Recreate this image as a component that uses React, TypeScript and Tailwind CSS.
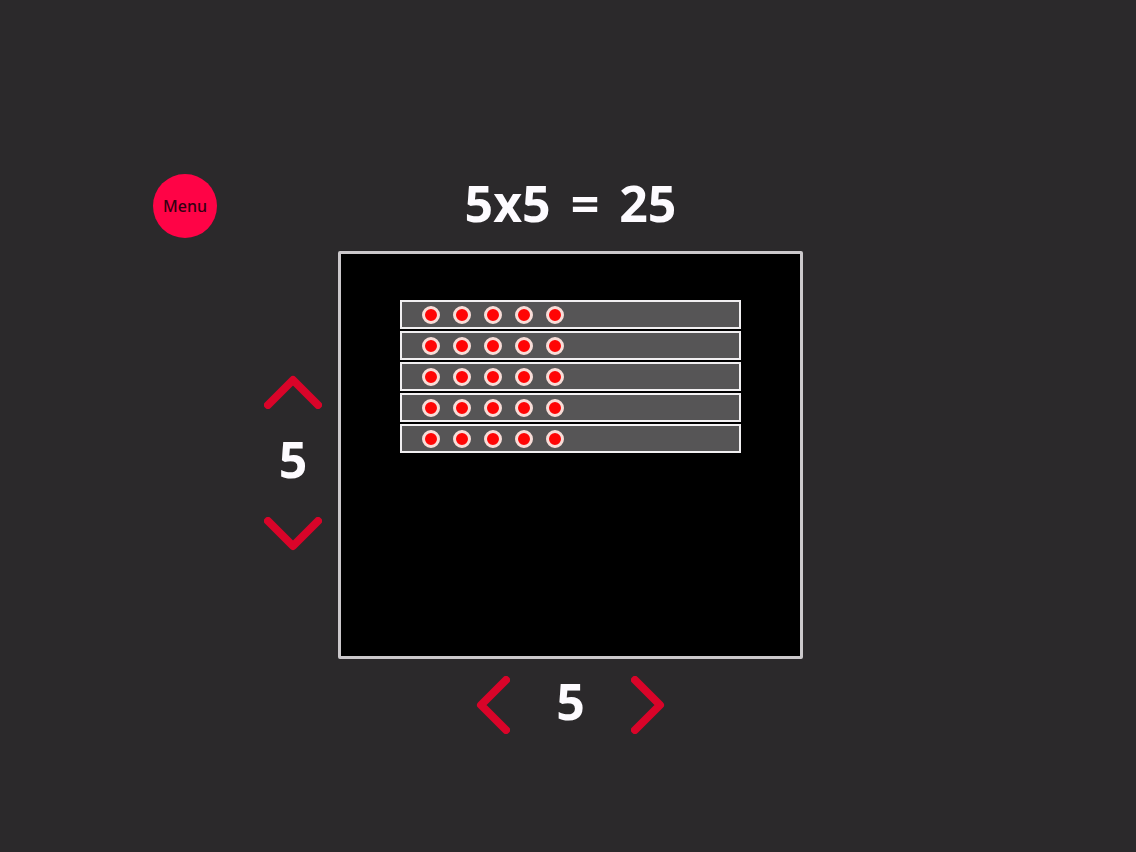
import { useState } from "react";

type Direction = "up" | "down" | "left" | "right";

const arrowPoints: Record<Direction, string> = {
  up: "4,30 29,5 54,30",
  down: "4,4 29,29 54,4",
  left: "30,4 5,29 30,54",
  right: "4,4 29,29 4,54",
};

function ArrowButton({
  direction,
  label,
  onClick,
}: {
  direction: Direction;
  label: string;
  onClick: () => void;
}) {
  const vertical = direction === "up" || direction === "down";
  return (
    <button type="button" aria-label={label} onClick={onClick} className="block shrink-0 cursor-pointer">
      <svg
        width={vertical ? 58 : 34}
        height={vertical ? 34 : 58}
        viewBox={vertical ? "0 0 58 34" : "0 0 34 58"}
        fill="none"
        stroke="#d90429"
        strokeWidth={8}
        strokeLinecap="round"
        strokeLinejoin="round"
        className="block"
      >
        <polyline points={arrowPoints[direction]} />
      </svg>
    </button>
  );
}

function CounterRow({ count }: { count: number }) {
  return (
    <div className="flex h-[29px] items-center gap-[13px] border-2 border-[#f1eff1] bg-[#565556] pl-5">
      {Array.from({ length: count }, (_, i) => (
        <span key={i} className="size-[18px] rounded-full border-3 border-[#f8ddd8] bg-[#ff0505]" />
      ))}
    </div>
  );
}

const clamp = (value: number) => Math.min(10, Math.max(1, value));

export default function App() {
  const [rows, setRows] = useState(5);
  const [columns, setColumns] = useState(5);

  return (
    <main className="min-h-screen bg-[#2b292b] pt-[174px] pl-[5px] font-['Noto_Sans',sans-serif] text-[50px] leading-[58px] font-bold text-[#fdfbff]">
      <div className="grid grid-cols-[1fr_minmax(0,465px)_1fr]">
        <div className="flex justify-end pr-[121px]">
          <button
            type="button"
            className="size-16 cursor-pointer rounded-full bg-[#ff0346] text-base font-medium text-[#330010]"
          >
            Menu
          </button>
        </div>
        <h1 className="flex justify-center gap-5 whitespace-nowrap">
          <span>
            {rows}x{columns}
          </span>
          <span>=</span>
          <span>{rows * columns}</span>
        </h1>
      </div>

      <div className="mt-[13px] grid grid-cols-[1fr_minmax(0,465px)_1fr]">
        <div className="flex flex-col items-end justify-center pt-4 pr-4">
          <div className="flex flex-col items-center gap-[21px]">
            <ArrowButton direction="up" label="More rows" onClick={() => setRows(clamp(rows + 1))} />
            <output className="pb-2">{rows}</output>
            <ArrowButton direction="down" label="Fewer rows" onClick={() => setRows(clamp(rows - 1))} />
          </div>
        </div>
        <section className="flex min-h-[408px] flex-col gap-0.5 rounded-xs border-3 border-[#cbc8cb] bg-black px-[59px] py-[46px]">
          {Array.from({ length: rows }, (_, i) => (
            <CounterRow key={i} count={columns} />
          ))}
        </section>
      </div>

      <div className="mt-[13px] grid grid-cols-[1fr_minmax(0,465px)_1fr]">
        <div className="col-start-2 flex items-center justify-center gap-[46px]">
          <ArrowButton direction="left" label="Fewer columns" onClick={() => setColumns(clamp(columns - 1))} />
          <output className="pb-2">{columns}</output>
          <ArrowButton direction="right" label="More columns" onClick={() => setColumns(clamp(columns + 1))} />
        </div>
      </div>
    </main>
  );
}
